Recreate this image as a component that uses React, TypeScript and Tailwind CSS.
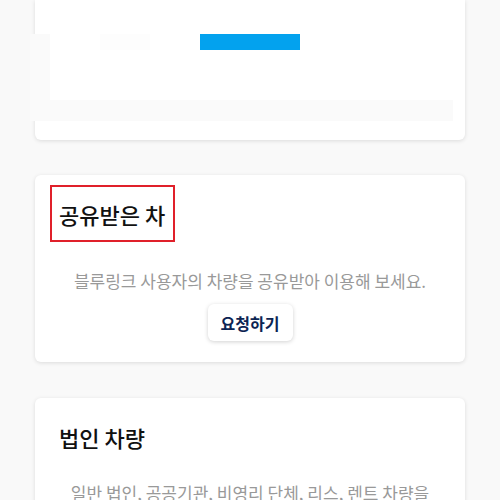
export default function App() {
  return (
    <div
      className="min-h-[500px] bg-[#f9f9f9] px-[35px] pb-10 overflow-hidden"
      style={{ fontFamily: '"Noto Sans CJK KR", "Noto Sans", sans-serif' }}
    >
      {/* top card, cut off by the viewport */}
      <div className="h-[140px] rounded-b-md bg-white pt-[34px] shadow-[0_1px_4px_rgba(0,0,0,0.12)]">
        <div className="-ml-[5px] h-[87px] w-[423px] bg-[#fafafa]">
          <div className="ml-[20px] flex h-[66px] items-start bg-white">
            <div className="w-[50px]" />
            <div className="h-4 w-[50px] bg-[#fdfdfd]" />
            <div className="w-[50px]" />
            <div className="h-4 w-[100px] bg-[#03a2ee]" />
          </div>
        </div>
      </div>

      {/* shared car */}
      <div className="mt-[35px] rounded-md bg-white px-6 pt-[10px] pb-[21px] shadow-[0_1px_4px_rgba(0,0,0,0.12)]">
        <div className="-ml-[9px] flex h-[57px] w-[125px] items-center border-2 border-[#e0202a] pl-[7px]">
          <h2 className="text-[22px] font-medium leading-7 text-[#111]">공유받은 차</h2>
        </div>
        <p className="mt-[27px] text-center text-[17px] leading-6 text-[#999] break-keep">
          블루링크 사용자의 차량을 공유받아 이용해 보세요.
        </p>
        <div className="mt-[11px] flex justify-center">
          <button className="h-[37px] w-[85px] rounded-md bg-white text-[16px] font-bold text-[#0c2452] shadow-[0_1px_4px_rgba(0,0,0,0.18)]">
            요청하기
          </button>
        </div>
      </div>

      {/* corporate car */}
      <div className="mt-[36px] rounded-md bg-white px-6 pt-[10px] pb-[21px] shadow-[0_1px_4px_rgba(0,0,0,0.12)]">
        <div className="flex h-[57px] items-center">
          <h2 className="text-[22px] font-medium leading-7 text-[#111]">법인 차량</h2>
        </div>
        <p className="mt-[16px] text-center text-[17px] leading-6 text-[#999] break-keep">
          일반 법인, 공공기관, 비영리 단체, 리스, 렌트 차량을 등록해 이용해 보세요.
        </p>
      </div>
    </div>
  );
}
